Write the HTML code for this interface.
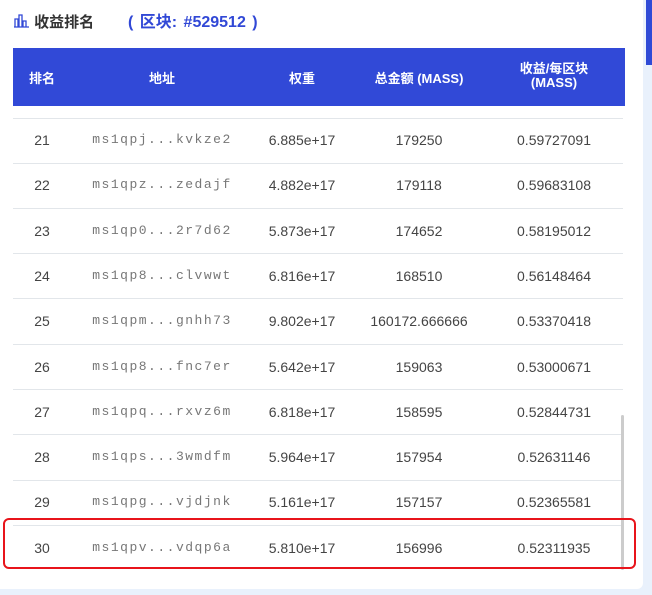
<!DOCTYPE html>
<html><head><meta charset="utf-8"><style>
body{margin:0;width:652px;height:595px;background:#e9f1fc;position:relative;overflow:hidden;font-family:"Liberation Sans","Noto Sans CJK SC",sans-serif}
.card{position:absolute;left:0;top:0;width:643px;height:589px;background:#fff;border-radius:0 0 6px 0}
.strip{position:absolute;left:646px;top:0;width:6px;height:65px;background:#2f4ad6}
.title{position:absolute;left:13px;top:11px;font-size:15px;color:#333;font-weight:bold}
.blk{position:absolute;left:128px;top:8px;font-size:16px;color:#3148d6;font-weight:bold;word-spacing:2px}
.hdr{position:absolute;left:13px;top:48px;width:612px;height:58px;background:#3149d7;color:#fff;font-weight:bold;font-size:13px}
.hdr div,.row div{position:absolute;transform:translateX(-50%);text-align:center;white-space:nowrap}
.row{position:absolute;left:0;width:652px;height:45px;font-size:14px;color:#444}
.sep{position:absolute;left:13px;width:610px;height:1px;background:#e2e6ea}
.mono{font-family:"Liberation Mono",monospace;font-size:13px;color:#777;letter-spacing:1.5px}
.sb{position:absolute;left:621px;top:415px;width:3px;height:155px;background:#ccc;border-radius:2px}
.red{position:absolute;left:3px;top:518px;width:629px;height:47px;border:2px solid #e8141b;border-radius:6px}
</style></head><body>
<div class="card"></div><div class="strip"></div>
<div class="title"><svg width="17" height="14" viewBox="0 0 17 14" style="vertical-align:-1px"><path d="M1 13H16M2 13V5H5V13M6 13V1H9V13M10 13V7H13V13" fill="none" stroke="#3148d6" stroke-width="1.3"/></svg> 收益排名</div>
<div class="blk">( 区块: #529512 )</div>
<div class="hdr">
<div style="left:29px;top:20px">排名</div>
<div style="left:149px;top:20px">地址</div>
<div style="left:289px;top:20px">权重</div>
<div style="left:406px;top:20px">总金额 (MASS)</div>
<div style="left:541px;top:14px;line-height:14px">收益/每区块<br>(MASS)</div>
</div>
<div class="sep" style="top:118px"></div>
<div id="rows"></div>
<div class="sb"></div>
<div class="red"></div>
<script>
var d=[["21","ms1qpj...kvkze2","6.885e+17","179250","0.59727091"],["22","ms1qpz...zedajf","4.882e+17","179118","0.59683108"],["23","ms1qp0...2r7d62","5.873e+17","174652","0.58195012"],["24","ms1qp8...clvwwt","6.816e+17","168510","0.56148464"],["25","ms1qpm...gnhh73","9.802e+17","160172.666666","0.53370418"],["26","ms1qp8...fnc7er","5.642e+17","159063","0.53000671"],["27","ms1qpq...rxvz6m","6.818e+17","158595","0.52844731"],["28","ms1qps...3wmdfm","5.964e+17","157954","0.52631146"],["29","ms1qpg...vjdjnk","5.161e+17","157157","0.52365581"],["30","ms1qpv...vdqp6a","5.810e+17","156996","0.52311935"]];
var h="";d.forEach(function(r,i){var y=140+i*45.3;h+='<div class="row" style="top:'+(y-8)+'px"><div style="left:42px">'+r[0]+'</div><div class="mono" style="left:162px">'+r[1]+'</div><div style="left:302px">'+r[2]+'</div><div style="left:419px">'+r[3]+'</div><div style="left:554px">'+r[4]+'</div></div>';if(i<9)h+='<div class="sep" style="top:'+Math.round(y+22.5)+'px"></div>';});
document.getElementById("rows").innerHTML=h;
</script>
</body></html>
